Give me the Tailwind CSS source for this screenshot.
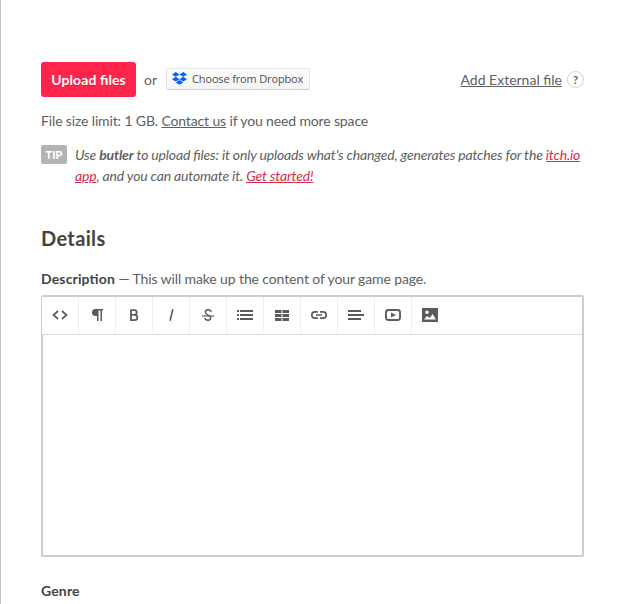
<!DOCTYPE html>
<html lang="en"><head><meta charset="utf-8"><title>Upload</title>
<script src="https://cdn.jsdelivr.net/npm/@tailwindcss/browser@4"></script></head>
<body class="bg-white">
<main class="h-[604px] w-[622px] overflow-hidden border-l border-[#c4c4c4] pl-10 pr-[38px] pt-[62px] font-['Lato',sans-serif] text-[14px] leading-[21px] text-[#606060] [font-feature-settings:'liga'_1]">
  <div class="flex h-[35px] items-center">
    <button class="h-[35px] w-[95px] rounded-[3px] bg-[#ff2449] text-[14px] font-bold tracking-[0.08px] text-white [text-shadow:0_1px_0_#d81e3d]">Upload files</button>
    <span class="ml-[8px]">or</span>
    <a class="ml-[9px] -mt-[2px] flex h-[22px] w-[144px] items-center rounded-[2px] border border-[#e4e4e4] border-b-[#cfcfcf] bg-gradient-to-b from-[#fcfcfc] to-[#f5f5f5] pl-[5px] font-['Open_Sans',sans-serif] text-[11px] font-medium tracking-[-0.15px] text-[#505050]">
      <svg class="mr-[5px] h-[13px] w-[15px] shrink-0" viewBox="0 0 15 13" fill="#0061fe"><path d="M3.75 0 7.5 2.4 3.75 4.8 0 2.4zM11.25 0 15 2.4 11.25 4.8 7.5 2.4zM3.75 4.8 7.5 7.2 3.75 9.6 0 7.2zM11.25 4.8 15 7.2 11.25 9.6 7.5 7.2zM3.75 10.4 7.5 8 11.25 10.4 7.5 12.8z"/></svg>
      <span class="whitespace-nowrap">Choose from Dropbox</span></a>
    <a class="ml-auto underline">Add External file</a>
    <span class="ml-[5px] flex size-[17px] items-center justify-center rounded-full border border-[#d0d0d0] text-[11px] font-bold">?</span>
  </div>
  <p class="mt-[13px] whitespace-nowrap tracking-[-0.14px]">File size limit: 1 GB. <a class="underline">Contact us</a> if you need more space</p>
  <div class="mt-[13px] flex">
    <span class="mr-2 mt-[1px] flex h-[19px] w-[26px] shrink-0 items-center justify-center rounded-[2px] bg-[#b3b3b3] text-[11px] font-black text-white">TIP</span>
    <p class="whitespace-nowrap italic tracking-[-0.17px]">Use <b>butler</b> to upload files: it only uploads what's changed, generates patches for the <a class="text-[#da2c49] underline">itch.io<br>app</a>, and you can automate it. <a class="text-[#da2c49] underline">Get started!</a></p>
  </div>
  <h2 class="mt-[37px] text-[20px] font-bold leading-[30px] tracking-[0.35px] text-[#434343]">Details</h2>
  <p class="mt-[15px] whitespace-nowrap tracking-[-0.12px]"><b class="tracking-[0.15px] text-[#434343]">Description</b> — This will make up the content of your game page.</p>
  <section class="mt-[6px] h-[262px] w-[543px] rounded-[2px] border-2 border-[#cdcdcd]">
    <div class="-ml-px flex h-[38px] border-b border-[#dadada] bg-white pb-[2px] text-[#5b5b5b] [&>span]:-mb-[2px] [&>span]:flex [&>span]:w-[37px] [&>span]:items-center [&>span]:justify-center [&>span]:border-r [&>span]:border-[#efefef] [&>span]:pb-[2px] [&_svg]:size-[18px]">
      <span><svg viewBox="0 0 18 18" fill="none" stroke="currentColor" stroke-width="1.7"><path d="M7 5 2.5 9 7 13M11 5l4.5 4L11 13"/></svg></span>
      <span><svg viewBox="0 0 18 18" fill="currentColor"><path d="M7.500 3H15v1.500h-1V15h-1.500V4.500H10.500V15H9v-5H7.500a3.500 3.500 0 0 1 0-7z"/></svg></span>
      <span><svg viewBox="0 0 18 18" fill="none" stroke="currentColor" stroke-width="1.800"><path d="M6 4.200h3.400a2.300 2.300 0 0 1 0 4.600H6zM6 8.800h3.700a2.650 2.650 0 0 1 0 5.300H6z"/></svg></span>
      <span><svg viewBox="0 0 18 18" fill="none" stroke="currentColor" stroke-width="1.600"><path d="m10.800 3.300-2.700 11.500"/></svg></span>
      <span><svg viewBox="0 0 18 18" fill="none" stroke="currentColor" stroke-width="1.500"><path d="M12 5.800C11.500 3 6.400 3.200 6.400 6.200 6.400 9.400 11.700 8.800 11.700 11.800c0 3.200-5.200 3.100-5.900.2"/><path d="M3 10h12" stroke-width="1.200"/></svg></span>
      <span><svg viewBox="0 0 18 18" fill="currentColor"><path d="M1 4h2v2H1zM4 4h13v2H4zM1 8h2v2H1zM4 8h13v2H4zM1 12h2v2H1zM4 12h13v2H4z"/></svg></span>
      <span><svg viewBox="0 0 18 18" fill="currentColor"><path d="M2 4h6.500v3H2zM9.500 4H16v3H9.500zM2 8h6.500v3H2zM9.500 8H16v3H9.500zM2 12h6.500v3H2zM9.500 12H16v3H9.500z"/></svg></span>
      <span><svg viewBox="0 0 18 18" fill="none" stroke="currentColor" stroke-width="1.700"><path d="M8 5.800H5a3.200 3.200 0 0 0 0 6.400h3M10 5.800h3a3.200 3.200 0 0 1 0 6.400h-3M6 9h6"/></svg></span>
      <span><svg viewBox="0 0 18 18" fill="currentColor"><path d="M1 4h13v2H1zM1 8h16v2H1zM1 12h13v2H1z"/></svg></span>
      <span><svg viewBox="0 0 18 18"><rect x="2" y="4" width="14" height="10" rx="2.500" fill="none" stroke="currentColor" stroke-width="1.900"/><path fill="currentColor" d="m7 6.500 5 2.500-5 2.500z"/></svg></span>
      <span class="border-white!"><svg viewBox="0 0 18 18" fill="currentColor" fill-rule="evenodd"><path d="M1 2h16v14H1zM3 13.500h12L11.500 8l-2.500 4-3-2zM6 4.500a1.700 1.700 0 1 0 0 3.400 1.700 1.700 0 0 0 0-3.400z"/></svg></span>
    </div>
  </section>
  <p class="mt-[23px] font-bold tracking-[0.15px] text-[#434343]">Genre</p>
</main></body></html>
